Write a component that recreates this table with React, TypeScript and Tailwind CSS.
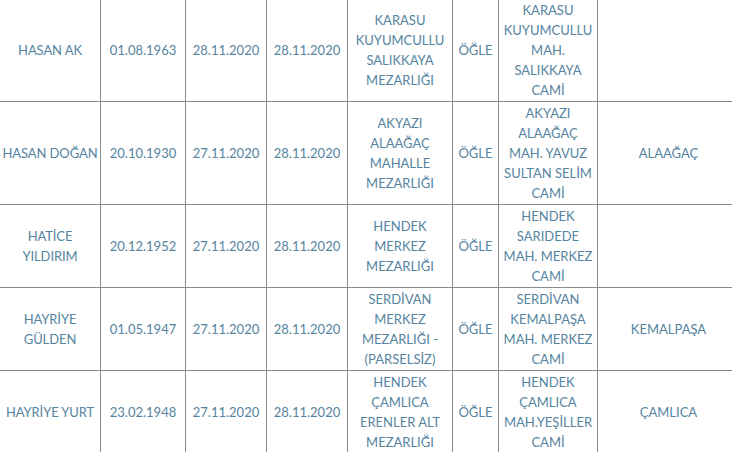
const rows = [
  {
    name: "HASAN AK",
    birth: "01.08.1963",
    death: "28.11.2020",
    burial: "28.11.2020",
    cemetery: "KARASU KUYUMCULLU SALIKKAYA MEZARLIĞI",
    prayer: "ÖĞLE",
    mosque: "KARASU KUYUMCULLU MAH. SALIKKAYA CAMİ",
    area: "",
  },
  {
    name: "HASAN DOĞAN",
    birth: "20.10.1930",
    death: "27.11.2020",
    burial: "28.11.2020",
    cemetery: "AKYAZI ALAAĞAÇ MAHALLE MEZARLIĞI",
    prayer: "ÖĞLE",
    mosque: "AKYAZI ALAAĞAÇ MAH. YAVUZ SULTAN SELİM CAMİ",
    area: "ALAAĞAÇ",
  },
  {
    name: "HATİCE\nYILDIRIM",
    birth: "20.12.1952",
    death: "27.11.2020",
    burial: "28.11.2020",
    cemetery: "HENDEK MERKEZ MEZARLIĞI",
    prayer: "ÖĞLE",
    mosque: "HENDEK SARIDEDE MAH. MERKEZ CAMİ",
    area: "",
  },
  {
    name: "HAYRİYE\nGÜLDEN",
    birth: "01.05.1947",
    death: "27.11.2020",
    burial: "28.11.2020",
    cemetery: "SERDİVAN MERKEZ MEZARLIĞI - (PARSELSİZ)",
    prayer: "ÖĞLE",
    mosque: "SERDİVAN KEMALPAŞA MAH. MERKEZ CAMİ",
    area: "KEMALPAŞA",
  },
  {
    name: "HAYRİYE YURT",
    birth: "23.02.1948",
    death: "27.11.2020",
    burial: "28.11.2020",
    cemetery: "HENDEK ÇAMLICA ERENLER ALT MEZARLIĞI",
    prayer: "ÖĞLE",
    mosque: "HENDEK ÇAMLICA MAH.YEŞİLLER CAMİ",
    area: "ÇAMLICA",
  },
];

const cell = "border border-[#8a8a8a] px-[2px] py-px text-center align-middle";
const nameCell = "border border-[#8a8a8a] px-0 py-px text-center align-middle whitespace-pre tracking-[-0.1px]";

export default function App() {
  return (
    <div className="w-[732px] h-[452px] overflow-hidden bg-white">
      <table
        className="-ml-px -mt-[2px] w-[740px] table-fixed border-collapse text-[13px] leading-[20px] text-[#5584a0]"
        style={{ fontFamily: "Lato, 'Noto Sans', sans-serif" }}
      >
        <colgroup>
          <col className="w-[101px]" />
          <col className="w-[85px]" />
          <col className="w-[81px]" />
          <col className="w-[81px]" />
          <col className="w-[105px]" />
          <col className="w-[46px]" />
          <col className="w-[99px]" />
          <col className="w-[142px]" />
        </colgroup>
        <tbody>
          {rows.map((r) => (
            <tr key={r.name}>
              <td className={nameCell}>{r.name}</td>
              <td className={cell}>{r.birth}</td>
              <td className={cell}>{r.death}</td>
              <td className={cell}>{r.burial}</td>
              <td className={cell}>{r.cemetery}</td>
              <td className={cell}>{r.prayer}</td>
              <td className={cell}>{r.mosque}</td>
              <td className={cell}>{r.area}</td>
            </tr>
          ))}
        </tbody>
      </table>
    </div>
  );
}
